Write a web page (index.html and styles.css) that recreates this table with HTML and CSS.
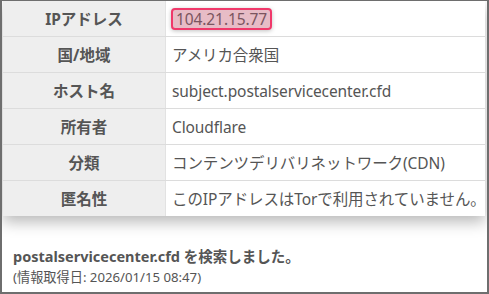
FILE: index.html
```html
<!DOCTYPE html>
<html lang="ja">
<head>
<meta charset="utf-8">
<link rel="stylesheet" href="styles.css">
</head>
<body>
<div class="frame">
  <table class="info">
    <tr><th>IPアドレス</th><td><span class="ip">104.21.15.77</span></td></tr>
    <tr><th>国/地域</th><td>アメリカ合衆国</td></tr>
    <tr><th>ホスト名</th><td>subject.postalservicecenter.cfd</td></tr>
    <tr><th>所有者</th><td>Cloudflare</td></tr>
    <tr><th>分類</th><td>コンテンツデリバリネットワーク(CDN)</td></tr>
    <tr><th>匿名性</th><td>このIPアドレスはTorで利用されていません。</td></tr>
  </table>
  <div class="result">
    <p class="searched">postalservicecenter.cfd を検索しました。</p>
    <p class="date">(情報取得日: 2026/01/15 08:47)</p>
  </div>
</div>
</body>
</html>
```
FILE: styles.css
```css
html, body {
  margin: 0;
  padding: 0;
  background: #fff;
}
.frame {
  width: 489px;
  height: 294px;
  box-sizing: border-box;
  border: 2px solid #6e6e6e;
  border-top-width: 1px;
  padding: 0 2px 0 1px;
  font-family: "Noto Sans", "Noto Sans CJK JP", sans-serif;
  color: #555;
  overflow: hidden;
}
.info {
  width: 100%;
  table-layout: fixed;
  border-collapse: collapse;
  box-shadow: 0 6px 14px rgba(0, 0, 0, 0.28);
}
.info th, .info td {
  height: 35px;
  padding: 0;
  border-bottom: 1px solid #dcdcdc;
  font-size: 15.5px;
  line-height: 20px;
  white-space: nowrap;
}
.info tr:last-child th, .info tr:last-child td {
  border-bottom: none;
}
.info th {
  width: 162px;
  background: #eeeeee;
  font-weight: bold;
  text-align: center;
  border-right: 1px solid #e2e2e2;
}
.info td {
  padding-left: 6px;
  text-align: left;
  letter-spacing: -0.1px;
}
.ip {
  display: inline-block;
  background: #e7bcc6;
  border: 2px solid #f0386a;
  border-radius: 4px;
  padding: 0 3px;
  margin-left: -1px;
  color: #7a5560;
  box-shadow: 0 1px 4px rgba(0, 0, 0, 0.25);
  line-height: 18px;
}
.result {
  padding: 29px 0 0 10px;
}
.result p {
  margin: 0;
}
.searched {
  font-size: 14.5px;
  font-weight: bold;
  line-height: 22px;
}
.date {
  font-size: 13.2px;
  line-height: 20px;
}
```
